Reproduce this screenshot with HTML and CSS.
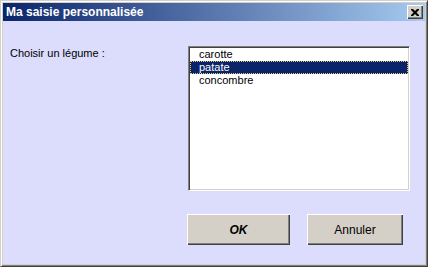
FILE: index.html
```html
<!DOCTYPE html>
<html lang="fr">
<head>
    <meta charset="UTF-8">
    <title>Ma saisie personnalisée</title>
    <link rel="stylesheet" href="styles.css">
</head>
<body>
    <div class="window">
        <div class="titlebar">
            <span class="title">Ma saisie personnalisée</span>
            <button class="close" aria-label="Fermer">
                <svg width="8" height="7" viewBox="0 0 8 7">
                    <path d="M0 0h2l2 2 2-2h2v1l-2.5 2.5L8 6v1H6L4 5 2 7H0V6l2.5-2.5L0 1z" fill="#000"/>
                </svg>
            </button>
        </div>
        <div class="content">
            <div class="row">
                <label class="label" for="legumes">Choisir un légume :</label>
                <div class="listbox" id="legumes">
                    <div class="item">carotte</div>
                    <div class="item selected">patate</div>
                    <div class="item">concombre</div>
                </div>
            </div>
            <div class="buttons">
                <button class="btn btn-ok">OK</button>
                <button class="btn btn-cancel">Annuler</button>
            </div>
        </div>
    </div>
</body>
</html>
```

FILE: styles.css
```css
body {
    margin: 0;
    font-family: "Liberation Sans", Arial, sans-serif;
    font-size: 11px;
    background-color: #d4d0c8;
}
.window {
    width: 428px;
    height: 267px;
    box-sizing: border-box;
    display: flex;
    flex-direction: column;
    border-top: 1px solid #d4d0c8;
    border-left: 1px solid #d4d0c8;
    border-right: 1px solid #404040;
    border-bottom: 1px solid #404040;
    box-shadow: inset 1px 1px 0 #fff, inset -1px -1px 0 #808080;
    padding: 2px 2px 2px 2px;
    background-color: #d4d0c8;
}
.titlebar {
    height: 18px;
    display: flex;
    align-items: center;
    justify-content: space-between;
    padding: 0 2px 0 2px;
    background: linear-gradient(to right, #0a246a, #a6caf0);
}
.title {
    color: #fff;
    font-weight: bold;
    font-size: 12px;
    padding-left: 1px;
}
.close {
    width: 16px;
    height: 14px;
    padding: 0;
    display: flex;
    align-items: center;
    justify-content: center;
    background-color: #d4d0c8;
    border: none;
    box-shadow: inset 1px 1px 0 #fff, inset -1px -1px 0 #404040, inset -2px -2px 0 #808080;
}
.content {
    flex: 1;
    background-color: #dcdcfc;
    padding: 25px 0 0 7px;
}
.row {
    display: flex;
}
.label {
    width: 178px;
    padding-top: 1px;
    color: #000;
}
.listbox {
    width: 222px;
    height: 145px;
    box-sizing: border-box;
    background-color: #fff;
    border-top: 1px solid #808080;
    border-left: 1px solid #808080;
    border-right: 1px solid #fff;
    border-bottom: 1px solid #fff;
    box-shadow: inset 1px 1px 0 #404040, inset -1px -1px 0 #d4d0c8;
    padding: 1px;
}
.item {
    height: 13px;
    line-height: 13px;
    padding-left: 9px;
    color: #000;
}
.item.selected {
    background-color: #0a246a;
    color: #fff;
    outline: 1px dotted #e8c870;
    outline-offset: -1px;
}
.buttons {
    display: flex;
    gap: 17px;
    margin-top: 23px;
    margin-left: 177px;
}
.btn {
    height: 31px;
    background-color: #d4d0c8;
    border: none;
    box-shadow: inset 1px 1px 0 #fff, inset -1px -1px 0 #404040, inset -2px -2px 0 #808080;
    font-family: "Liberation Sans", Arial, sans-serif;
    font-size: 12px;
    color: #000;
}
.btn-ok {
    width: 103px;
    font-weight: bold;
    font-style: italic;
}
.btn-cancel {
    width: 96px;
}
```
